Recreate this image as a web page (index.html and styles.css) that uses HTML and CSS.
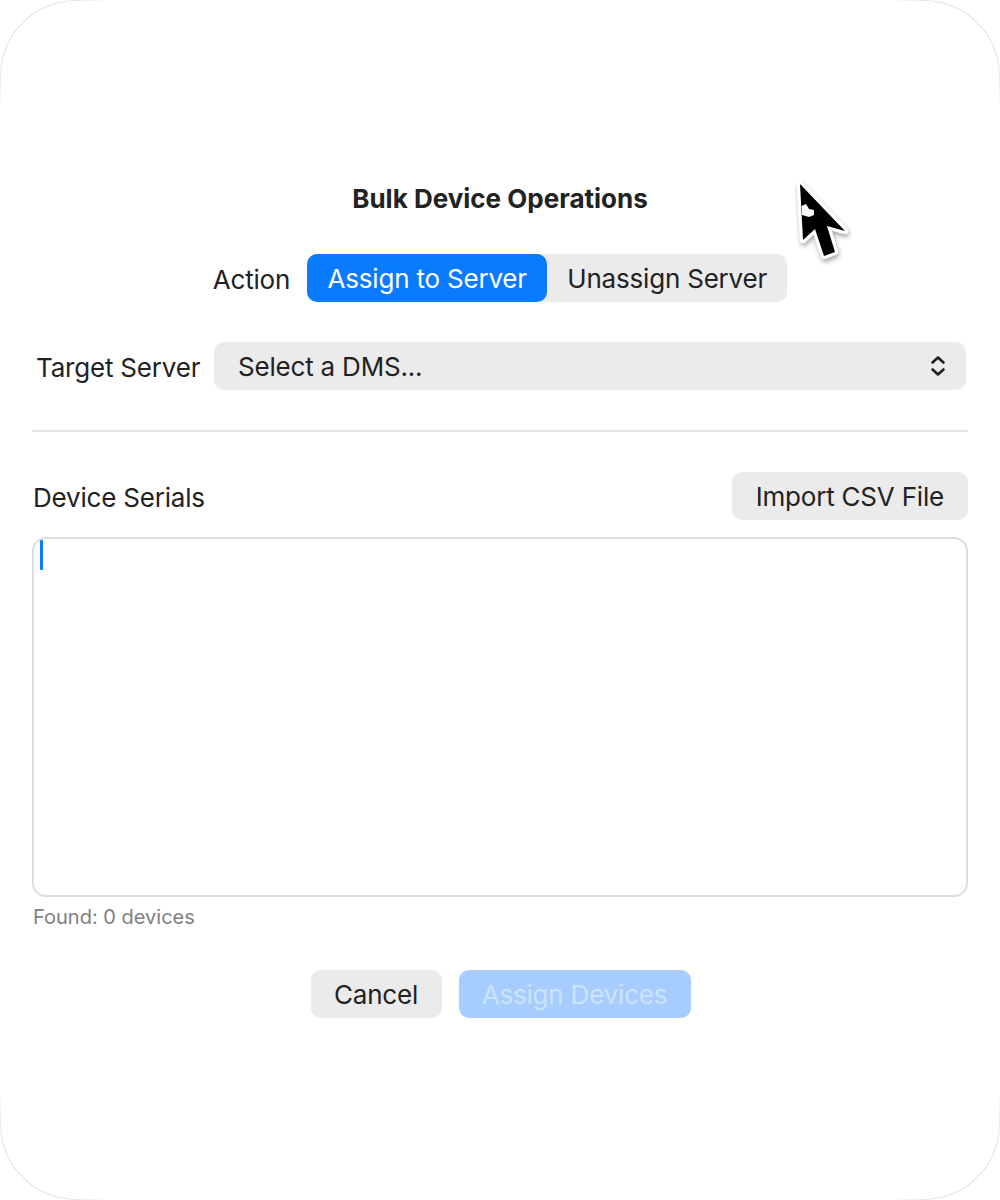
FILE: index.html
```html
<!DOCTYPE html>
<html>
<head>
<meta charset="utf-8">
<link rel="stylesheet" href="styles.css">
</head>
<body>
<div class="window">
  <h1 class="title">Bulk Device Operations</h1>
  <div class="action-row">
    <span class="label">Action</span>
    <div class="segmented">
      <div class="seg seg-on">Assign to Server</div>
      <div class="seg">Unassign Server</div>
    </div>
  </div>
  <div class="target-row">
    <span class="label target-label">Target Server</span>
    <div class="popup">
      <span>Select a DMS...</span>
      <svg class="chev" width="16" height="22" viewBox="0 0 16 22"><path d="M2.5 7.5 L8 2.5 L13.5 7.5 M2.5 14.5 L8 19.5 L13.5 14.5" fill="none" stroke="#1f1f1f" stroke-width="2.6" stroke-linecap="round" stroke-linejoin="round"/></svg>
    </div>
  </div>
  <div class="divider"></div>
  <div class="serials-row">
    <span class="label">Device Serials</span>
    <div class="btn">Import CSV File</div>
  </div>
  <div class="textarea"><div class="caret"></div></div>
  <div class="found">Found: 0 devices</div>
  <div class="buttons">
    <div class="btn cancel">Cancel</div>
    <div class="btn primary-disabled">Assign Devices</div>
  </div>
  <svg class="pointer" width="64" height="96" viewBox="0 0 64 96">
    <defs><filter id="sh" x="-40%" y="-40%" width="180%" height="180%"><feDropShadow dx="1" dy="3" stdDeviation="2.5" flood-opacity="0.35"/></filter></defs>
    <path d="M6 8 L9 64 L21 53 L30 80 L41 76 L33 50 L51 55 Z" fill="#000" stroke="#fff" stroke-width="6" stroke-linejoin="round" filter="url(#sh)"/>
    <path d="M6 8 L9 64 L21 53 L30 80 L41 76 L33 50 L51 55 Z" fill="#000"/>
    <path d="M7.5 30 L12 28 L15 33 L20 34 L20 39 L15 41 L8 39 Z" fill="#fff"/>
  </svg>
</div>
</body>
</html>
```
FILE: styles.css
```css
* { box-sizing: border-box; }
html, body { margin: 0; padding: 0; background: #fff; }
body {
  font-family: Inter, "Noto Sans", "Liberation Sans", sans-serif;
  color: #252525;
  -webkit-font-smoothing: antialiased;
}
.window {
  position: relative;
  width: 1000px;
  height: 1200px;
  border-radius: 76px;
  padding: 0 32px;
  display: flex;
  flex-direction: column;
  background: #fff;
}
.window::before {
  content: "";
  position: absolute;
  inset: 0;
  border: 1.5px solid #d6d6d6;
  border-radius: 76px;
  pointer-events: none;
  -webkit-mask-image: linear-gradient(to right, #000 0, #000 50px, transparent 110px, transparent 890px, #000 950px, #000 100%), linear-gradient(to bottom, #000 0, #000 50px, transparent 110px, transparent 1090px, #000 1150px, #000 100%);
  -webkit-mask-composite: source-in;
  mask-image: linear-gradient(to right, #000 0, #000 50px, transparent 110px, transparent 890px, #000 950px, #000 100%), linear-gradient(to bottom, #000 0, #000 50px, transparent 110px, transparent 1090px, #000 1150px, #000 100%);
  mask-composite: intersect;
}
.title {
  margin: 184px 0 0;
  font-size: 26px;
  line-height: 30px;
  font-weight: 700;
  text-align: center;
  color: #222;
}
.label {
  font-size: 26px;
  line-height: 30px;
  padding-top: 4px;
  color: #222;
  letter-spacing: -0.2px;
}
.action-row {
  margin-top: 40px;
  display: flex;
  align-items: center;
  justify-content: center;
  gap: 17px;
}
.segmented {
  display: flex;
  background: #ebebeb;
  border-radius: 10px;
  height: 48px;
}
.seg {
  width: 240px;
  height: 48px;
  display: flex;
  align-items: center;
  justify-content: center;
  font-size: 26px;
  color: #222;
  border-radius: 10px;
  letter-spacing: -0.2px;
}
.seg-on {
  background: #0a7aff;
  color: #fff;
}
.target-row {
  margin-top: 40px;
  display: flex;
  align-items: center;
  height: 48px;
}
.target-label {
  padding-left: 4px;
  width: 182px;
}
.popup {
  flex: 1;
  margin-right: 2px;
  height: 48px;
  background: #ebebeb;
  border-radius: 10px;
  display: flex;
  align-items: center;
  justify-content: space-between;
  padding: 0 20px 0 24px;
  font-size: 26px;
  color: #222;
  letter-spacing: -0.2px;
}
.chev { display: block; }
.divider {
  margin-top: 40px;
  height: 2px;
  background: #e3e3e3;
}
.serials-row {
  margin-top: 40px;
  height: 48px;
  display: flex;
  align-items: center;
  justify-content: space-between;
  padding-left: 1px;
}
.btn {
  height: 48px;
  padding: 0 24px;
  background: #ebebeb;
  border-radius: 10px;
  display: flex;
  align-items: center;
  justify-content: center;
  font-size: 26px;
  color: #222;
  letter-spacing: -0.2px;
}
.textarea {
  margin-top: 17px;
  height: 360px;
  border: 2px solid #dedede;
  border-radius: 14px;
  position: relative;
}
.caret {
  position: absolute;
  left: 6px;
  top: 1px;
  width: 3px;
  height: 30px;
  background: #0a7aff;
  border-radius: 1px;
}
.found {
  margin-top: 8px;
  font-size: 20px;
  line-height: 24px;
  color: #808080;
  padding-left: 1px;
}
.buttons {
  margin-top: 41px;
  display: flex;
  justify-content: center;
  gap: 17px;
  padding-left: 1px;
}
.cancel { width: 131px; padding: 0; }
.primary-disabled {
  width: 232px;
  padding: 0;
  background: #a6cdfe;
  color: #cce3fe;
}
.pointer {
  position: absolute;
  left: 794px;
  top: 176px;
}
```
